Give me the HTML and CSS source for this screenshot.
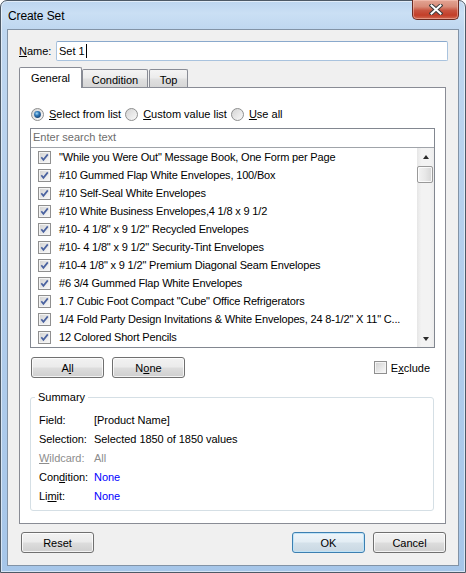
FILE: index.html
```html
<!DOCTYPE html>
<html>
<head>
<meta charset="utf-8">
<title>Create Set</title>
<link rel="stylesheet" href="styles.css">
</head>
<body>
<svg class="defs" width="0" height="0" aria-hidden="true">
  <defs>
    <linearGradient id="cbg" x1="0" y1="0" x2="1" y2="1">
      <stop offset="0" stop-color="#d4d4d4"/>
      <stop offset="1" stop-color="#f7f7f7"/>
    </linearGradient>
    <linearGradient id="rg" x1="0" y1="0" x2="1" y2="1">
      <stop offset="0" stop-color="#d2d2d2"/>
      <stop offset="1" stop-color="#fbfbfb"/>
    </linearGradient>
    <radialGradient id="rdot" cx="0.4" cy="0.35" r="0.7">
      <stop offset="0" stop-color="#a7dcf7"/>
      <stop offset="0.45" stop-color="#2f78b8"/>
      <stop offset="1" stop-color="#173f6e"/>
    </radialGradient>
    <symbol id="cbox" viewBox="0 0 13 13">
      <rect x="0.5" y="0.5" width="12" height="12" fill="#f4f4f4" stroke="#8f8f8f"/>
      <rect x="2" y="2" width="9" height="9" fill="url(#cbg)"/>
    </symbol>
    <symbol id="chk" viewBox="0 0 13 13">
      <rect x="0.5" y="0.5" width="12" height="12" fill="#f4f4f4" stroke="#8f8f8f"/>
      <rect x="2" y="2" width="9" height="9" fill="url(#cbg)"/>
      <path d="M3.3 6.3 L5.4 8.9 L9.8 3.4" fill="none" stroke="#4a62a0" stroke-width="1.7"/>
    </symbol>
  </defs>
</svg>

<div class="window">
  <div class="titlebar">
    <span class="title">Create Set</span>
    <div class="close">
      <svg width="14" height="11" viewBox="0 0 14 11">
        <path d="M2.5 1.5 L11.5 9.5 M11.5 1.5 L2.5 9.5" stroke="#3b3b3b" stroke-width="4" stroke-linecap="square"/>
        <path d="M2.5 1.5 L11.5 9.5 M11.5 1.5 L2.5 9.5" stroke="#ffffff" stroke-width="2" stroke-linecap="square"/>
      </svg>
    </div>
  </div>

  <div class="client">
    <div class="name-row">
      <label class="name-label"><u>N</u>ame:</label>
      <div class="input">Set 1<span class="caret"></span></div>
    </div>

    <div class="tabs">
      <div class="tab active">General</div>
      <div class="tab tab-cond">Condition</div>
      <div class="tab tab-top">Top</div>
    </div>

    <div class="panel">
      <div class="radios">
        <div class="radio-opt first">
          <svg class="radio" viewBox="0 0 13 13"><circle cx="6.5" cy="6.5" r="6" fill="url(#rg)" stroke="#8e8f8f"/><circle cx="6.5" cy="6.5" r="3.4" fill="url(#rdot)"/></svg>
          <span><u>S</u>elect from list</span>
        </div>
        <div class="radio-opt">
          <svg class="radio" viewBox="0 0 13 13"><circle cx="6.5" cy="6.5" r="6" fill="url(#rg)" stroke="#8e8f8f"/></svg>
          <span><u>C</u>ustom value list</span>
        </div>
        <div class="radio-opt">
          <svg class="radio" viewBox="0 0 13 13"><circle cx="6.5" cy="6.5" r="6" fill="url(#rg)" stroke="#8e8f8f"/></svg>
          <span><u>U</u>se all</span>
        </div>
      </div>

      <div class="listbox">
        <div class="search">Enter search text</div>
        <div class="listarea">
          <div class="items">
            <div class="item"><svg class="cb"><use href="#chk"/></svg><span>"While you Were Out" Message Book, One Form per Page</span></div>
            <div class="item"><svg class="cb"><use href="#chk"/></svg><span>#10 Gummed Flap White Envelopes, 100/Box</span></div>
            <div class="item"><svg class="cb"><use href="#chk"/></svg><span>#10 Self-Seal White Envelopes</span></div>
            <div class="item"><svg class="cb"><use href="#chk"/></svg><span>#10 White Business Envelopes,4 1/8 x 9 1/2</span></div>
            <div class="item"><svg class="cb"><use href="#chk"/></svg><span>#10- 4 1/8" x 9 1/2" Recycled Envelopes</span></div>
            <div class="item"><svg class="cb"><use href="#chk"/></svg><span>#10- 4 1/8" x 9 1/2" Security-Tint Envelopes</span></div>
            <div class="item"><svg class="cb"><use href="#chk"/></svg><span>#10-4 1/8" x 9 1/2" Premium Diagonal Seam Envelopes</span></div>
            <div class="item"><svg class="cb"><use href="#chk"/></svg><span>#6 3/4 Gummed Flap White Envelopes</span></div>
            <div class="item"><svg class="cb"><use href="#chk"/></svg><span>1.7 Cubic Foot Compact "Cube" Office Refrigerators</span></div>
            <div class="item"><svg class="cb"><use href="#chk"/></svg><span>1/4 Fold Party Design Invitations &amp; White Envelopes, 24 8-1/2" X 11" C...</span></div>
            <div class="item"><svg class="cb"><use href="#chk"/></svg><span>12 Colored Short Pencils</span></div>
          </div>
          <div class="scrollbar">
            <div class="sb-btn"><span class="arrow-up"></span></div>
            <div class="thumb"></div>
            <div class="sb-track"></div>
            <div class="sb-btn"><span class="arrow-down"></span></div>
          </div>
        </div>
      </div>

      <div class="btn-row">
        <div class="btn btn-all">A<u>l</u>l</div>
        <div class="btn btn-none">N<u>o</u>ne</div>
        <div class="exclude">
          <svg class="cb"><use href="#cbox"/></svg>
          <span>E<u>x</u>clude</span>
        </div>
      </div>

      <fieldset class="summary">
        <legend>Summary</legend>
        <div class="row"><span class="lbl">Field:</span><span>[Product Name]</span></div>
        <div class="row"><span class="lbl">Selection:</span><span>Selected 1850 of 1850 values</span></div>
        <div class="row disabled"><span class="lbl"><u>W</u>ildcard:</span><span>All</span></div>
        <div class="row"><span class="lbl">Con<u>d</u>ition:</span><span class="link">None</span></div>
        <div class="row"><span class="lbl">Li<u>m</u>it:</span><span class="link">None</span></div>
      </fieldset>
    </div>

    <div class="footer">
      <div class="btn btn-reset">Reset</div>
      <div class="btn btn-ok">OK</div>
      <div class="btn btn-cancel">Cancel</div>
    </div>
  </div>
</div>
</body>
</html>
```

FILE: styles.css
```css
* { box-sizing: border-box; }

body {
  margin: 0;
  background: #ffffff;
  font-family: "Liberation Sans", Arial, sans-serif;
  font-size: 11px;
  color: #000000;
}

.defs { position: absolute; width: 0; height: 0; }

u { text-decoration: underline; text-underline-offset: 1px; }

.window {
  width: 466px;
  height: 573px;
  border: 1px solid #4d5966;
  border-radius: 7px 7px 0 0;
  background: linear-gradient(180deg, #bcd5ef 0px, #cadff4 12px, #bfd7f0 28px, #b6d0ed 200px, #a6c6e9 573px);
  box-shadow: inset 0 0 0 1px rgba(255,255,255,0.55);
  padding: 0 6px 6px 6px;
  display: flex;
  flex-direction: column;
}

.titlebar {
  height: 28px;
  display: flex;
  align-items: flex-start;
  flex-shrink: 0;
}

.title {
  font-size: 12px;
  line-height: 14px;
  margin-top: 8px;
  margin-left: 1px;
  letter-spacing: -0.1px;
  color: #000;
}

.close {
  margin-left: auto;
  margin-top: -1px;
  width: 47px;
  height: 20px;
  border: 1px solid #6b2b22;
  border-top: none;
  border-radius: 0 0 5px 5px;
  background: linear-gradient(180deg, #e3a594 0%, #d88b78 35%, #c85440 55%, #c33e29 80%, #d06a52 100%);
  box-shadow: inset 0 0 0 1px rgba(255,210,200,0.45);
  display: flex;
  align-items: center;
  justify-content: center;
}

.client {
  flex: 1;
  background: #f0f0f0;
  border: 1px solid #8293a6;
  padding: 11px 12px 12px 11px;
  display: flex;
  flex-direction: column;
}

/* Name row */
.name-row {
  display: flex;
  align-items: center;
  height: 20px;
}
.name-label { width: 37px; }
.input {
  flex: 1;
  margin-right: -2px;
  height: 20px;
  background: #fff;
  border: 1px solid #a9c3de;
  border-top-color: #8aa9cc;
  border-radius: 2px;
  padding-left: 2px;
  display: flex;
  align-items: center;
}
.caret {
  display: inline-block;
  width: 1px;
  height: 14px;
  background: #000;
  margin-left: 1px;
}

/* Tabs */
.tabs {
  display: flex;
  align-items: flex-end;
  height: 21px;
  margin-top: 6px;
  margin-bottom: -1px;
  position: relative;
  z-index: 1;
}
.tab {
  height: 18px;
  margin-bottom: 1px;
  border: 1px solid #898c95;
  border-bottom: none;
  border-radius: 2px 2px 0 0;
  background: linear-gradient(180deg, #f4f4f4 0%, #ececec 45%, #e0e0e0 55%, #d6d6d6 100%);
  display: flex;
  align-items: center;
  justify-content: center;
  padding-top: 2px;
}
.tab.active {
  width: 63px;
  height: 21px;
  margin-bottom: 0;
  background: #ffffff;
  padding-top: 0;
}
.tab-cond { width: 66px; }
.tab-top { width: 39px; margin-left: 1px; }

/* Panel */
.panel {
  background: #ffffff;
  border: 1px solid #898c95;
  padding: 18px 10px 12px 10px;
  display: flex;
  flex-direction: column;
}

.radios {
  display: flex;
  align-items: center;
  height: 16px;
}
.radio-opt {
  display: flex;
  align-items: center;
  gap: 5px;
  margin-right: 4px;
}
.radio-opt.first { margin-left: 1px; }
.radio { width: 13px; height: 13px; }

/* Listbox */
.listbox {
  margin-top: 6px;
  border: 1px solid #828790;
}
.search {
  height: 19px;
  border-bottom: 1px solid #a0a4aa;
  color: #6d6d6d;
  padding-left: 2px;
  line-height: 17px;
}
.listarea {
  display: flex;
  height: 199px;
}
.items {
  flex: 1;
  padding-left: 7px;
  overflow: hidden;
}
.item {
  height: 18px;
  display: flex;
  align-items: center;
  gap: 8px;
  white-space: nowrap;
  letter-spacing: -0.17px;
}
.cb { width: 13px; height: 13px; flex-shrink: 0; }

.scrollbar {
  width: 17px;
  display: flex;
  flex-direction: column;
  background: linear-gradient(90deg, #e6e6e6 0%, #f3f3f3 25%, #f3f3f3 75%, #ececec 100%);
}
.sb-btn {
  height: 17px;
  display: flex;
  align-items: center;
  justify-content: center;
}
.arrow-up {
  width: 0; height: 0;
  border-left: 3.5px solid transparent;
  border-right: 3.5px solid transparent;
  border-bottom: 4px solid #2b2b2b;
}
.arrow-down {
  width: 0; height: 0;
  border-left: 3.5px solid transparent;
  border-right: 3.5px solid transparent;
  border-top: 4px solid #2b2b2b;
}
.thumb {
  height: 17px;
  width: 16px;
  margin-top: 1px;
  border: 1px solid #999999;
  border-radius: 2px;
  background: linear-gradient(90deg, #f3f3f3 0%, #e8e8e8 50%, #d6d6d6 100%);
  box-shadow: inset 0 0 0 1px rgba(255,255,255,0.8);
}
.sb-track { flex: 1; }

/* Buttons */
.btn-row {
  display: flex;
  align-items: center;
  height: 21px;
  margin-top: 9px;
}
.btn {
  width: 73px;
  height: 21px;
  border: 1px solid #707070;
  border-radius: 3px;
  background: linear-gradient(180deg, #f2f2f2 0%, #ebebeb 48%, #dddddd 52%, #cfcfcf 100%);
  box-shadow: inset 0 0 0 1px rgba(255,255,255,0.75);
  display: flex;
  align-items: center;
  justify-content: center;
}
.btn-all { margin-left: 1px; }
.btn-none { margin-left: 8px; }
.exclude {
  margin-left: auto;
  margin-right: 5px;
  display: flex;
  align-items: center;
  gap: 4px;
}

/* Summary */
.summary {
  margin: 12px 1px 0 0;
  border: 1px solid #d5dfe5;
  border-radius: 3px;
  padding: 6px 0 5px 8px;
  min-width: 0;
}
.summary legend {
  margin-left: -4px;
  padding: 0 3px;
  line-height: 14px;
}
.row {
  display: flex;
  align-items: center;
  height: 19px;
  letter-spacing: -0.05px;
}
.lbl { width: 55px; }
.row.disabled { color: #8d8d8d; }
.link { color: #0000ff; }

/* Footer */
.footer {
  display: flex;
  height: 21px;
  margin-top: 8px;
}
.btn-reset { margin-left: 2px; }
.btn-ok {
  margin-left: auto;
  border-color: #3c7fb1;
  background: linear-gradient(180deg, #eef5fa 0%, #e3edf4 48%, #d4e1ea 52%, #c9d8e3 100%);
  box-shadow: inset 0 0 0 1px #bfe3f7;
}
.btn-cancel { margin-left: 8px; }
```
